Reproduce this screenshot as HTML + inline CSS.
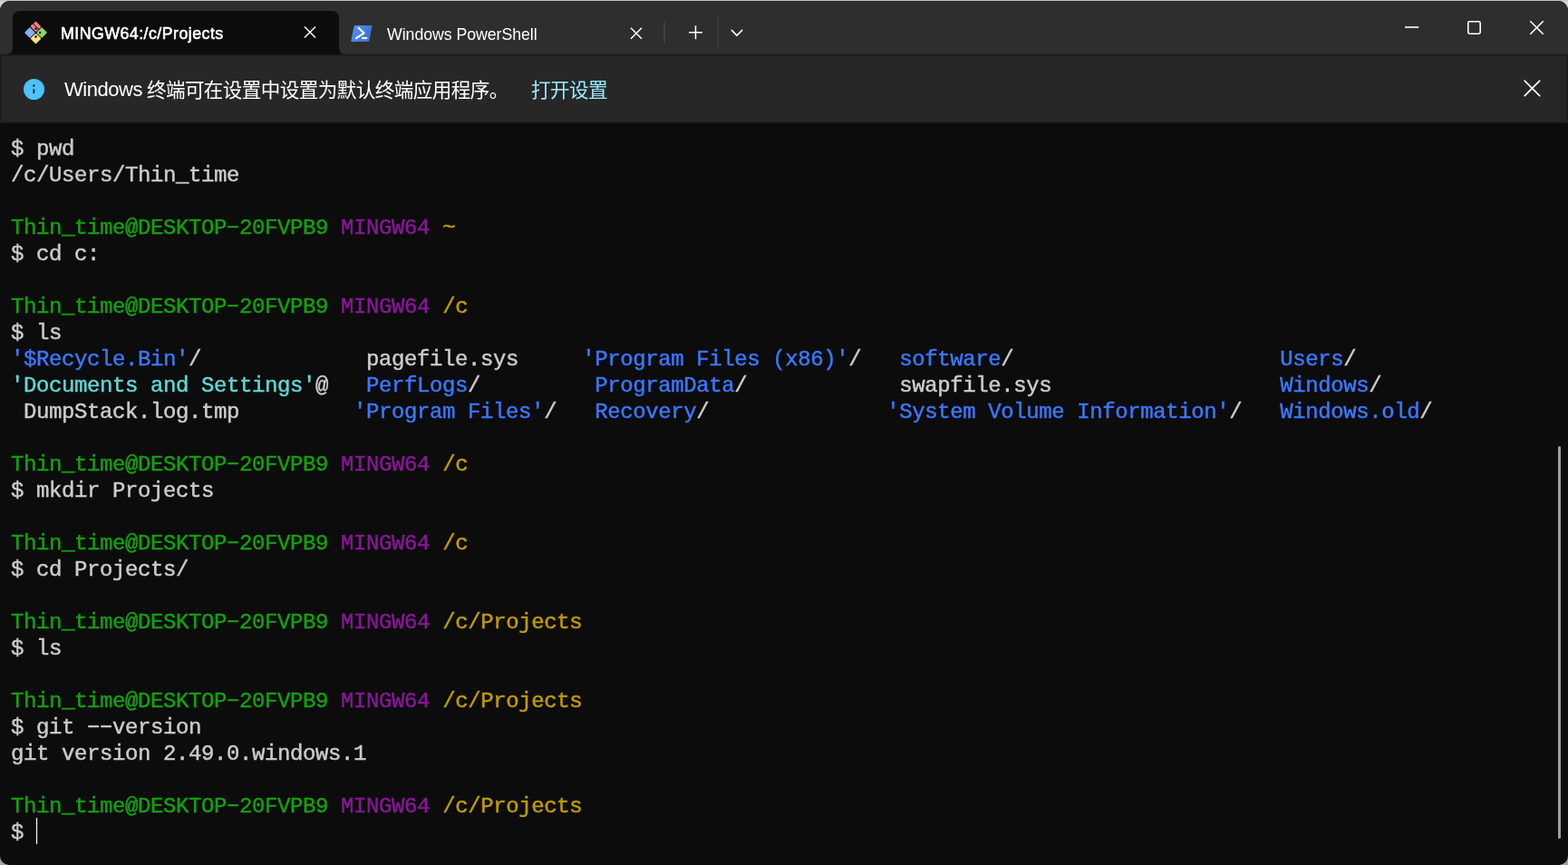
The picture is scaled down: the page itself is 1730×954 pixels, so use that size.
<!DOCTYPE html>
<html lang="zh-CN">
<head>
<meta charset="utf-8">
<title>MINGW64:/c/Projects</title>
<style>
html,body{margin:0;padding:0;}
body{width:1730px;height:954px;overflow:hidden;background:linear-gradient(#d6d6d6,#d0d0d0 50%,#a2a2a2 51%,#a2a2a2);font-family:"Liberation Sans",sans-serif;position:relative;}
#topline{position:absolute;left:0;top:0;width:1730px;height:1px;background:#bdbdbd;}
#win{position:absolute;left:0;top:1px;width:1730px;height:953px;background:#0c0c0c;border-radius:11px 11px 10px 10px;overflow:hidden;}
#titlebar{position:absolute;left:0;top:0;width:1730px;height:57px;background:#2e2e2e;border-bottom:2px solid #2a2a2a;}
/* active tab */
#tab1{position:absolute;left:14px;top:11px;width:360px;height:48px;background:#0c0c0c;border-radius:8px 8px 0 0;}
#tab1:before,#tab1:after{content:"";position:absolute;bottom:0;width:7px;height:7px;}
#tab1:before{left:-7px;background:radial-gradient(circle at 0 0,rgba(12,12,12,0) 6.5px,#0c0c0c 7.5px);}
#tab1:after{right:-7px;background:radial-gradient(circle at 100% 0,rgba(12,12,12,0) 6.5px,#0c0c0c 7.5px);}
.tabtitle{position:absolute;top:12.7px;height:24px;line-height:24px;font-size:17.8px;color:#fff;white-space:nowrap;}
#t1{left:53px;letter-spacing:0.46px;-webkit-text-stroke:0.55px #fff;}
#t2{left:426.6px;top:24.7px;letter-spacing:-0.08px;}
svg{position:absolute;overflow:visible;}
#psicon{position:absolute;left:389.4px;top:27px;width:19.7px;height:17.8px;border-radius:1.3px;background:linear-gradient(100deg,#4f8ef7,#3f70cc);transform:skewX(-11.5deg);}
/* info bar */
#info{position:absolute;left:0;top:59px;width:1726px;height:72px;background:#272727;border:2px solid #1d1d1d;}
#infotext{position:absolute;left:70.5px;top:84.5px;height:26px;line-height:26px;font-size:22px;letter-spacing:-0.45px;color:#fff;white-space:nowrap;}
.hid{color:transparent;}
#term,.tabtitle,#infotext{will-change:transform;}
/* terminal */
#term{position:absolute;left:12px;top:148.8px;margin:0;font-family:"Liberation Mono",monospace;font-size:24px;line-height:29px;color:#cccccc;white-space:pre;letter-spacing:-0.4px;-webkit-text-stroke:0.45px currentColor;}
.h{display:inline-block;transform:translateY(-2px) scaleX(1.66);}
.g{color:#13a10e}.p{color:#881798}.y{color:#c19c00}.b{color:#3b78ff}.c{color:#61d6d6}
#cursor{position:absolute;left:40px;top:901px;width:1px;height:29px;background:#fff;box-shadow:0.5px 0 0 rgba(255,255,255,.25);}
#scroll{position:absolute;left:1719px;top:491px;width:3px;height:433px;background:#9e9e9e;border-radius:1.5px;}
</style>
</head>
<body>
<div id="topline"></div>
<div id="win">
  <div id="titlebar"></div>
  <div id="tab1">
    <div class="tabtitle" id="t1">MINGW64:/c/Projects</div>
  </div>
  <div id="psicon"></div>
  <div class="tabtitle" id="t2">Windows PowerShell</div>

  <div id="info"></div>
  <div id="infotext">Windows </div>

  <pre id="term">$ pwd
/c/Users/Thin_time

<span class="g">Thin_time@DESKTOP<span class="h">-</span>20FVPB9</span> <span class="p">MINGW64</span> <span class="y">~</span>
$ cd c:

<span class="g">Thin_time@DESKTOP<span class="h">-</span>20FVPB9</span> <span class="p">MINGW64</span> <span class="y">/c</span>
$ ls
<span class="b">'$Recycle.Bin'</span>/             pagefile.sys     <span class="b">'Program Files (x86)'</span>/   <span class="b">software</span>/                     <span class="b">Users</span>/
<span class="c">'Documents and Settings'</span>@   <span class="b">PerfLogs</span>/         <span class="b">ProgramData</span>/            swapfile.sys                  <span class="b">Windows</span>/
 DumpStack.log.tmp         <span class="b">'Program Files'</span>/   <span class="b">Recovery</span>/              <span class="b">'System Volume Information'</span>/   <span class="b">Windows.old</span>/

<span class="g">Thin_time@DESKTOP<span class="h">-</span>20FVPB9</span> <span class="p">MINGW64</span> <span class="y">/c</span>
$ mkdir Projects

<span class="g">Thin_time@DESKTOP<span class="h">-</span>20FVPB9</span> <span class="p">MINGW64</span> <span class="y">/c</span>
$ cd Projects/

<span class="g">Thin_time@DESKTOP<span class="h">-</span>20FVPB9</span> <span class="p">MINGW64</span> <span class="y">/c/Projects</span>
$ ls

<span class="g">Thin_time@DESKTOP<span class="h">-</span>20FVPB9</span> <span class="p">MINGW64</span> <span class="y">/c/Projects</span>
$ git <span class="h">-</span><span class="h">-</span>version
git version 2.49.0.windows.1

<span class="g">Thin_time@DESKTOP<span class="h">-</span>20FVPB9</span> <span class="p">MINGW64</span> <span class="y">/c/Projects</span>
$ </pre>
  <div id="cursor"></div>
  <div id="scroll"></div>

  <!-- all vector art: coordinates are page pixels (window is offset 1px down) -->
  <svg id="art" width="1730" height="953" viewBox="0 1 1730 953" style="left:0;top:0">
    <!-- git for windows icon -->
    <g transform="translate(39.5 36) scale(.955) translate(-39.5 -35.9)">
    <g transform="rotate(45 39.5 35.9)">
      <rect x="30.2" y="26.6" width="8.9" height="3.9" rx="1.1" fill="#f87f7f"/>
      <rect x="29.8" y="31.3" width="9.3" height="3.9" rx="1.1" fill="#f87f7f"/>
      <rect x="39.9" y="26.6" width="8.9" height="8.9" rx="1.1" fill="#8ad464"/>
      <rect x="39.9" y="36.3" width="8.9" height="8.9" rx="1.1" fill="#fbe27f"/>
      <rect x="30.2" y="36.3" width="8.9" height="8.9" rx="1.1" fill="#7fb2ff"/>
    </g>
    <g fill="#0c0c0c">
      <ellipse cx="39.5" cy="31.5" rx="1.2" ry="1.3"/><circle cx="44.3" cy="35.9" r="1.25"/><ellipse cx="39.5" cy="40.6" rx="1.2" ry="1.5"/>
      <circle cx="39.5" cy="35.9" r="0.9"/>
    </g>
    </g>
    <!-- tab1 close -->
    <path d="M336 29.5l12 12M348 29.5l-12 12" stroke="#fff" stroke-width="1.5" fill="none"/>
    <!-- powershell icon -->
    <path d="M395.6 30.8l6.1 5.6-8.6 5.8" stroke="#fff" stroke-width="2.1" fill="none" stroke-linecap="round" stroke-linejoin="round"/>
    <path d="M399.2 42h6" stroke="#fff" stroke-width="2.1" fill="none"/>
    <!-- tab2 close -->
    <path d="M696 30.7l12 12M708 30.7l-12 12" stroke="#fff" stroke-width="1.5" fill="none"/>
    <!-- separators -->
    <path d="M733 24.5v23.5" stroke="#474747" stroke-width="1.5"/>
    <path d="M792.2 18v35.5" stroke="#3f3f3f" stroke-width="1.5"/>
    <!-- plus -->
    <path d="M760 35.7h15M767.5 28.2v15" stroke="#fff" stroke-width="1.5" fill="none"/>
    <!-- chevron -->
    <path d="M807.3 33.4l5.7 5.7 5.7-5.7" stroke="#fff" stroke-width="1.5" fill="none" stroke-linecap="round" stroke-linejoin="round"/>
    <!-- window controls -->
    <path d="M1550 30h15.2" stroke="#fff" stroke-width="1.6"/>
    <rect x="1619.8" y="23.8" width="13.4" height="13.4" rx="1.6" stroke="#fff" stroke-width="1.6" fill="none"/>
    <path d="M1688.3 23.3l14.4 14.4M1702.7 23.3l-14.4 14.4" stroke="#fff" stroke-width="1.6" fill="none"/>
    <!-- info icon -->
    <circle cx="37.5" cy="98.5" r="11.5" fill="#4cc2ff"/>
    <circle cx="37.3" cy="94.5" r="1.15" fill="#111"/>
    <path d="M37.3 98.1V103" stroke="#111" stroke-width="1.7"/>
    <!-- info close -->
    <path d="M1682.2 89.2l16.5 16.5M1698.7 89.2l-16.5 16.5" stroke="#fff" stroke-width="1.7" fill="none" stroke-linecap="round"/>
    <!-- CJK text -->
    <text x="161.9" y="106.5" font-size="21.6" fill="#ffffff" letter-spacing="-0.6" font-family="'Liberation Sans','Noto Sans CJK SC',sans-serif">终端可在设置中设置为默认终端应用程序。</text>
    <text x="586" y="106.5" font-size="21.6" fill="#99e9fe" letter-spacing="-0.6" font-family="'Liberation Sans','Noto Sans CJK SC',sans-serif">打开设置</text>
  </svg>
</div>
</body>
</html>
